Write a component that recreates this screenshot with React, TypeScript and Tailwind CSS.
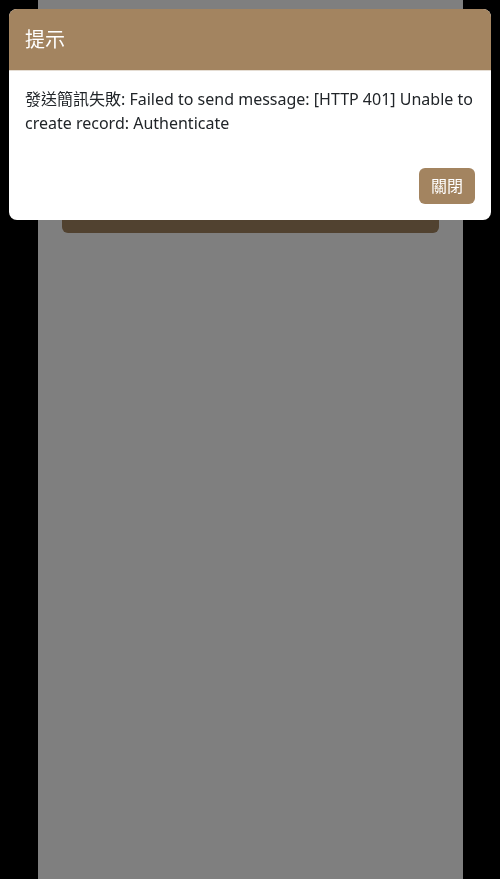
import React from "react"

const App = () => {
  return (
    <div className="relative min-h-[879px] bg-black" style={{ fontFamily: '"Noto Sans", "Noto Sans CJK TC", sans-serif' }}>
      <div className="mx-auto w-[425px] min-h-[879px] bg-white px-6 pt-5">
        <div className="h-[213px] rounded-md bg-[#a38460]" />
      </div>

      <div className="fixed inset-0 bg-black/50" />

      <div className="absolute left-[9px] right-[9px] top-[9px] overflow-hidden rounded-lg bg-white">
        <div className="flex h-[62px] items-center border-b border-[#e5ddd3] bg-[#a38460] px-4">
          <h2 className="text-xl text-white">提示</h2>
        </div>
        <div className="px-4 pt-4 pb-[33px] text-base leading-6 text-[#212529]">
          發送簡訊失敗: Failed to send message: [HTTP 401] Unable to create record: Authenticate
        </div>
        <div className="flex justify-end px-4 pb-4">
          <button className="h-9 rounded-md bg-[#a38460] px-3 text-base text-white">關閉</button>
        </div>
      </div>
    </div>
  )
}

export default App
